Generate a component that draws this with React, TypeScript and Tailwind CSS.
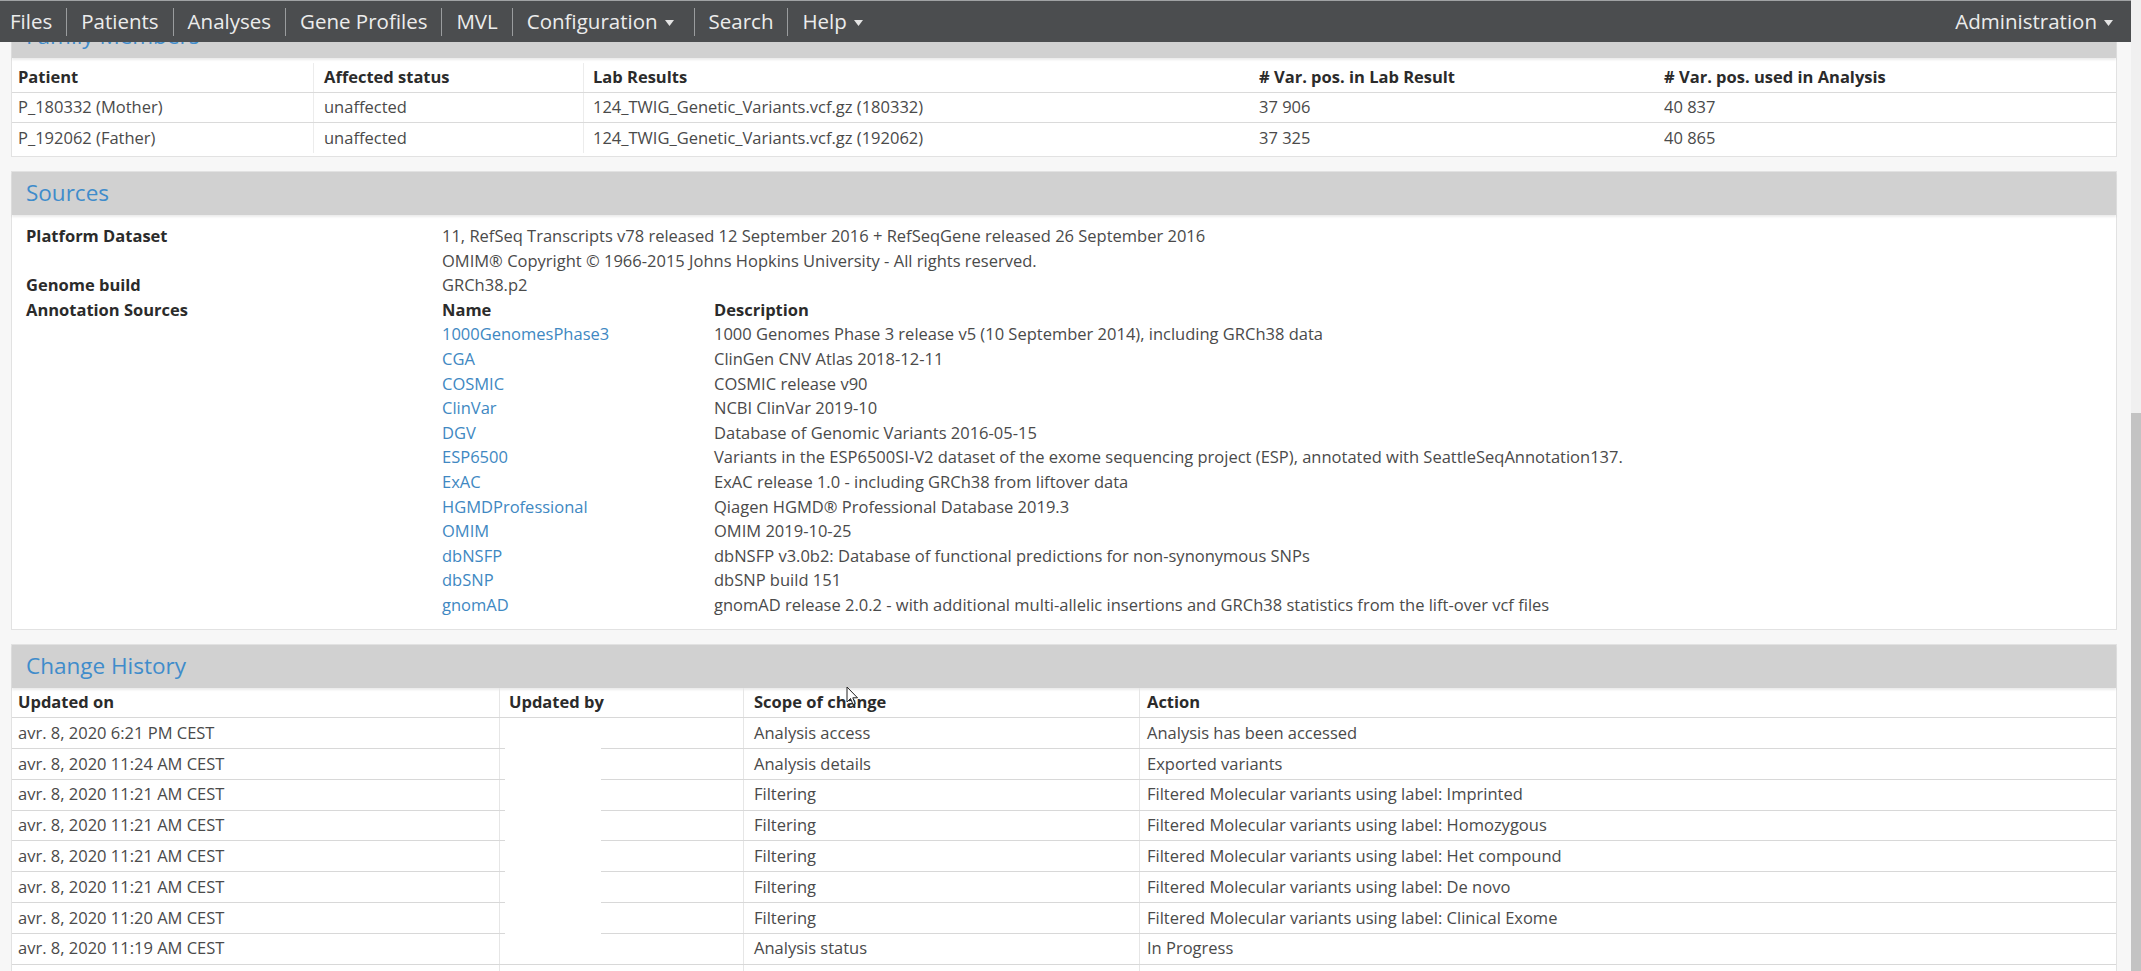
import { Fragment } from 'react'

const navItems = [
  { label: 'Files' },
  { label: 'Patients' },
  { label: 'Analyses' },
  { label: 'Gene Profiles' },
  { label: 'MVL' },
  { label: 'Configuration', menu: true },
  { label: 'Search' },
  { label: 'Help', menu: true },
]

const familyMembers = [
  {
    patient: 'P_180332 (Mother)',
    status: 'unaffected',
    lab: '124_TWIG_Genetic_Variants.vcf.gz (180332)',
    inLab: '37 906',
    used: '40 837',
  },
  {
    patient: 'P_192062 (Father)',
    status: 'unaffected',
    lab: '124_TWIG_Genetic_Variants.vcf.gz (192062)',
    inLab: '37 325',
    used: '40 865',
  },
]

const annotationSources = [
  ['1000GenomesPhase3', '1000 Genomes Phase 3 release v5 (10 September 2014), including GRCh38 data'],
  ['CGA', 'ClinGen CNV Atlas 2018-12-11'],
  ['COSMIC', 'COSMIC release v90'],
  ['ClinVar', 'NCBI ClinVar 2019-10'],
  ['DGV', 'Database of Genomic Variants 2016-05-15'],
  [
    'ESP6500',
    'Variants in the ESP6500SI-V2 dataset of the exome sequencing project (ESP), annotated with SeattleSeqAnnotation137.',
  ],
  ['ExAC', 'ExAC release 1.0 - including GRCh38 from liftover data'],
  ['HGMDProfessional', 'Qiagen HGMD® Professional Database 2019.3'],
  ['OMIM', 'OMIM 2019-10-25'],
  ['dbNSFP', 'dbNSFP v3.0b2: Database of functional predictions for non-synonymous SNPs'],
  ['dbSNP', 'dbSNP build 151'],
  [
    'gnomAD',
    'gnomAD release 2.0.2 - with additional multi-allelic insertions and GRCh38 statistics from the lift-over vcf files',
  ],
]

const history = [
  ['avr. 8, 2020 6:21 PM CEST', 'Analysis access', 'Analysis has been accessed'],
  ['avr. 8, 2020 11:24 AM CEST', 'Analysis details', 'Exported variants'],
  ['avr. 8, 2020 11:21 AM CEST', 'Filtering', 'Filtered Molecular variants using label: Imprinted'],
  ['avr. 8, 2020 11:21 AM CEST', 'Filtering', 'Filtered Molecular variants using label: Homozygous'],
  ['avr. 8, 2020 11:21 AM CEST', 'Filtering', 'Filtered Molecular variants using label: Het compound'],
  ['avr. 8, 2020 11:21 AM CEST', 'Filtering', 'Filtered Molecular variants using label: De novo'],
  ['avr. 8, 2020 11:20 AM CEST', 'Filtering', 'Filtered Molecular variants using label: Clinical Exome'],
  ['avr. 8, 2020 11:19 AM CEST', 'Analysis status', 'In Progress'],
  ['avr. 8, 2020 11:19 AM CEST', 'Analysis details', 'Analysis created'],
]

const Caret = () => (
  <svg width="9" height="6" viewBox="0 0 9 6" className="ml-[7px] mt-[2px]">
    <polygon points="0,0 9,0 4.5,6" fill="#e4e4e4" />
  </svg>
)

const SectionHeader = ({ title }: { title: string }) => (
  <div className="h-[43px] flex items-center pl-[14px] bg-[#d1d1d1] shadow-[0_2px_2px_rgba(0,0,0,0.08)]">
    <span className="text-[22.5px] text-[#3f8ccb] leading-none">{title}</span>
  </div>
)

export default function App() {
  return (
    <div className="relative h-[971px] overflow-hidden flex bg-[#f7f7f7] font-['Open_Sans',sans-serif] text-[16.5px] text-[#4a4a4a]">
      <div className="flex-1 min-w-0 flex flex-col">
        <nav className="relative z-10 h-[42px] shrink-0 flex items-center justify-between bg-[#4b4d4f] border-t border-[#a0a2a4] text-[20.5px] text-[#ececec]">
          <div className="flex items-center pl-[10px]">
            {navItems.map((item, i) => (
              <Fragment key={item.label}>
                {i > 0 && <div className="w-px h-[28px] bg-[#9a9c9e]" />}
                <div
                  className={
                    'flex items-center ' +
                    (i === 0 ? 'pr-[14px]' : 'px-[14px]') +
                    (item.menu ? ' pr-[20px]' : '')
                  }
                >
                  <span className="leading-none">{item.label}</span>
                  {item.menu && <Caret />}
                </div>
              </Fragment>
            ))}
          </div>
          <div className="flex items-center pr-[18px]">
            <span className="leading-none">Administration</span>
            <Caret />
          </div>
        </nav>

        <div className="mt-[-28px] ml-[11px] mr-[14px] flex flex-col gap-[14px]">
          {/* family members */}
          <div className="bg-white border border-[#e2e2e2]">
            <SectionHeader title="Family Members" />
            <div className="pt-[5px] pb-[3px]">
              {[
                {
                  patient: 'Patient',
                  status: 'Affected status',
                  lab: 'Lab Results',
                  inLab: '# Var. pos. in Lab Result',
                  used: '# Var. pos. used in Analysis',
                },
                ...familyMembers,
              ].map((row, i) => (
                <div
                  key={row.patient}
                  className={
                    'grid grid-cols-[302px_270px_666px_405px_1fr] h-[30px] items-center ' +
                    (i === 0
                      ? 'font-bold text-[#2b2b2b] border-b border-[#dadada]'
                      : i === 1
                        ? 'border-b border-[#dadada]'
                        : '')
                  }
                >
                  <div className="pl-[6px] h-full flex items-center border-r border-[#ececec]">{row.patient}</div>
                  <div className="pl-[10px] h-full flex items-center border-r border-[#ececec]">{row.status}</div>
                  <div className="pl-[9px] h-full flex items-center">{row.lab}</div>
                  <div className="pl-[9px] h-full flex items-center">{row.inLab}</div>
                  <div className="pl-[9px] h-full flex items-center">{row.used}</div>
                </div>
              ))}
            </div>
          </div>

          {/* sources */}
          <div className="bg-white border border-[#e2e2e2]">
            <SectionHeader title="Sources" />
            <div className="grid grid-cols-[416px_1fr] pl-[14px] pt-[9px] pb-[11px] leading-[24.6px]">
              <div className="font-bold text-[#2b2b2b]">Platform Dataset</div>
              <div>
                <div>11, RefSeq Transcripts v78 released 12 September 2016 + RefSeqGene released 26 September 2016</div>
                <div>OMIM® Copyright © 1966-2015 Johns Hopkins University - All rights reserved.</div>
              </div>
              <div className="font-bold text-[#2b2b2b]">Genome build</div>
              <div>GRCh38.p2</div>
              <div className="font-bold text-[#2b2b2b]">Annotation Sources</div>
              <div className="grid grid-cols-[272px_1fr]">
                <div className="font-bold text-[#2b2b2b]">Name</div>
                <div className="font-bold text-[#2b2b2b]">Description</div>
                {annotationSources.map(([name, desc]) => (
                  <Fragment key={name}>
                    <div className="text-[#4088c2]">{name}</div>
                    <div>{desc}</div>
                  </Fragment>
                ))}
              </div>
            </div>
          </div>

          {/* change history */}
          <div className="bg-white border border-[#e2e2e2]">
            <SectionHeader title="Change History" />
            <div className="relative">
              {[['Updated on', 'Scope of change', 'Action'], ...history].map((row, i) => (
                <div
                  key={i}
                  className={
                    'grid grid-cols-[488px_244px_396px_1fr] h-[30.8px] items-center border-b border-[#d8d8d8] ' +
                    (i === 0 ? 'font-bold text-[#2b2b2b]' : '')
                  }
                >
                  <div className="pl-[6px] h-full flex items-center border-r border-[#e6e6e6]">{row[0]}</div>
                  <div className="pl-[9px] h-full flex items-center border-r border-[#e6e6e6]">
                    {i === 0 ? 'Updated by' : ''}
                  </div>
                  <div className="pl-[10px] h-full flex items-center border-r border-[#e6e6e6]">{row[1]}</div>
                  <div className="pl-[7px] h-full flex items-center">{row[2]}</div>
                </div>
              ))}
              {/* redacted user names */}
              <div className="absolute left-[493px] top-[36px] w-[96px] h-[240px] bg-white" />
            </div>
          </div>
        </div>
      </div>

      {/* scrollbar */}
      <div className="w-[10px] shrink-0 flex flex-col bg-[#f0f0f0]">
        <div className="h-[413px]" />
        <div className="flex-1 bg-[#c3c3c3]" />
      </div>

      {/* mouse pointer */}
      <svg
        width="13"
        height="20"
        viewBox="0 0 13 20"
        className="absolute left-[846px] top-[686px] z-20"
      >
        <path
          d="M1 1 L1 16 L4.5 12.5 L7 18.5 L9.2 17.6 L6.8 11.8 L11.5 11.8 Z"
          fill="white"
          stroke="#222"
          strokeWidth="1"
        />
      </svg>
    </div>
  )
}
